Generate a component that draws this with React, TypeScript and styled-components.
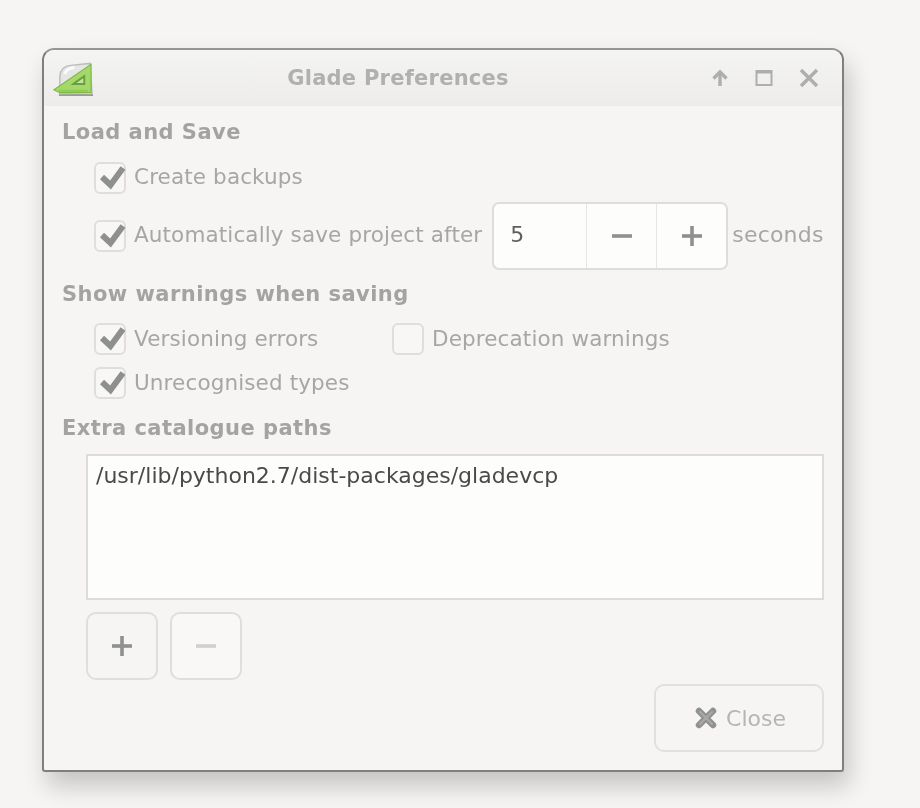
import React, { FC, ReactNode } from 'react';
import styled, { createGlobalStyle } from 'styled-components';

const GlobalStyle = createGlobalStyle`
  html, body {
    margin: 0;
    height: 100%;
    background: #f6f5f4;
  }
  body {
    font-family: "DejaVu Sans", sans-serif;
  }
`;

const Page = styled.div`
  width: 920px;
  height: 808px;
  box-sizing: border-box;
  padding: 48px 0 0 42px;
  background: #f6f5f4;
  overflow: hidden;
  filter: blur(0.7px);
`;

const Window = styled.div`
  width: 802px;
  height: 724px;
  box-sizing: border-box;
  display: flex;
  flex-direction: column;
  background: #f6f5f4;
  border: 2px solid #7f7f7d;
  border-top-color: #969694;
  border-radius: 12px 12px 3px 3px;
  box-shadow: 5px 14px 24px rgba(0, 0, 0, 0.2);
`;

const TitleBar = styled.div`
  height: 56px;
  flex: none;
  box-sizing: border-box;
  display: grid;
  grid-template-columns: 42px 1fr 132px;
  align-items: center;
  padding: 0 8px;
  border-radius: 10px 10px 0 0;
  background: linear-gradient(#f4f4f3, #edecea);
`;

const Title = styled.div`
  text-align: center;
  font-size: 21px;
  font-weight: 700;
  color: #b0b0ae;
  letter-spacing: 0.25px;
`;

const TitleButtons = styled.div`
  display: flex;
  justify-content: flex-end;
  align-items: center;
  gap: 26px;
  padding-right: 15px;
  color: #aeaeac;
`;

const Body = styled.div`
  flex: 1;
  padding: 13px 18px 0;
`;

const Heading = styled.div<{ $top?: number }>`
  height: 26px;
  line-height: 27px;
  margin-top: ${p => p.$top ?? 0}px;
  font-size: 21px;
  font-weight: 700;
  color: #a3a3a1;
  letter-spacing: 0.45px;
`;

const Row = styled.div<{ $top: number }>`
  display: flex;
  align-items: center;
  margin-top: ${p => p.$top}px;
  padding-left: 32px;
`;

const CheckLabel = styled.label<{ $width?: number }>`
  display: flex;
  align-items: center;
  gap: 8px;
  width: ${p => (p.$width ? `${p.$width}px` : 'auto')};
  font-size: 21.5px;
  color: #a6a6a4;
  letter-spacing: 0.12px;
  white-space: nowrap;
`;

const CheckText = styled.span<{ $drop?: number }>`
  padding-bottom: ${p => 4 - (p.$drop ?? 0)}px;
`;

const CheckBox = styled.span`
  width: 32px;
  height: 32px;
  flex: none;
  box-sizing: border-box;
  display: flex;
  align-items: center;
  justify-content: center;
  border: 2px solid #e0dedc;
  border-radius: 6px;
  background: #f8f7f6;
`;

const SpinBox = styled.div`
  display: flex;
  width: 236px;
  height: 68px;
  flex: none;
  box-sizing: border-box;
  margin-left: 10px;
  border: 2px solid #dfdddb;
  border-radius: 7px;
  background: #fdfdfc;
`;

const SpinValue = styled.div`
  width: 93px;
  box-sizing: border-box;
  padding-left: 16px;
  line-height: 62px;
  font-size: 22px;
  color: #5f5f5d;
`;

const SpinButton = styled.div`
  width: 70px;
  display: flex;
  align-items: center;
  justify-content: center;
  border-left: 1px solid #e8e6e4;
  color: #8f9090;
`;

const Unit = styled.span`
  margin-left: 4px;
  padding-bottom: 4px;
  font-size: 22px;
  color: #a6a6a4;
  letter-spacing: 0.2px;
`;

const PathList = styled.div`
  height: 146px;
  box-sizing: border-box;
  margin: 13px 0 0 24px;
  padding: 6px 8px;
  border: 2px solid #dedcda;
  background: #fdfdfc;
  font-size: 22px;
  line-height: 28px;
  color: #4a4a4a;
`;

const ListButtons = styled.div`
  display: flex;
  gap: 12px;
  margin: 12px 0 0 24px;
`;

const SquareButton = styled.div<{ $disabled?: boolean }>`
  width: 72px;
  height: 68px;
  box-sizing: border-box;
  display: flex;
  align-items: center;
  justify-content: center;
  border: 2px solid #e0dedc;
  border-radius: 10px;
  background: ${p => (p.$disabled ? '#f9f8f7' : '#f6f5f4')};
  color: ${p => (p.$disabled ? '#d2cfcc' : '#8f9090')};
`;

const DialogActions = styled.div`
  display: flex;
  justify-content: flex-end;
  margin-top: 4px;
`;

const CloseButton = styled.div`
  width: 170px;
  height: 68px;
  box-sizing: border-box;
  display: flex;
  align-items: center;
  justify-content: center;
  gap: 9px;
  padding-left: 3px;
  border: 2px solid #e2e0de;
  border-radius: 10px;
  font-size: 22px;
  color: #b5b5b3;
`;

const LogoSlot = styled.div`
  display: flex;
  padding: 3px 0 0 1px;
`;

const PlusIcon: FC = () => (
  <svg width="22" height="22" viewBox="0 0 22 22" fill="currentColor">
    <rect x="9.2" y="1" width="3.6" height="20" />
    <rect x="1" y="9.2" width="20" height="3.6" />
  </svg>
);

const MinusIcon: FC = () => (
  <svg width="22" height="22" viewBox="0 0 22 22" fill="currentColor">
    <rect x="1" y="9.2" width="20" height="3.6" />
  </svg>
);

const CheckMark: FC = () => (
  <svg width="28" height="26" viewBox="0 0 28 26" style={{ overflow: 'visible' }}>
    <path d="M6 12 L14.5 20 L27 3" fill="none" stroke="#8e908f" strokeWidth="6" />
  </svg>
);

const Check: FC<{ label: string; checked?: boolean; width?: number; drop?: number }> = ({ label, checked, width, drop }) => (
  <CheckLabel $width={width}>
    <CheckBox>{checked ? <CheckMark /> : null}</CheckBox>
    <CheckText $drop={drop}>{label}</CheckText>
  </CheckLabel>
);

const GladeLogo: FC = () => (
  <svg width="42" height="36" viewBox="0 0 42 36">
    <path d="M7 32 L7 14 Q8 4 18 3 L38 1 L40 33 Z" fill="#e6e6e4" stroke="#bdbdbb" strokeWidth="1.5" />
    <path d="M12 12 Q14 6 22 5" fill="none" stroke="#fafafa" strokeWidth="3" />
    <path d="M1 28 L39 2 L39 31 L7 31 Z" fill="#a5d86c" stroke="#7cbc41" strokeWidth="1.2" />
    <path d="M6 29 L36 29" stroke="#8ecb4e" strokeWidth="2" />
    <path d="M21 22 L32 14 L32 22 Z" fill="#c3e69a" stroke="#6a9f3f" strokeWidth="2" />
    <path d="M6 33.5 L41 33.5" stroke="#9a9a98" strokeWidth="2" />
  </svg>
);

const KeepAboveIcon: FC = () => (
  <svg width="18" height="18" viewBox="0 0 18 18" fill="none" stroke="currentColor" strokeWidth="3.4">
    <path d="M9 17 L9 3" />
    <path d="M2.5 9.5 L9 3 L15.5 9.5" />
  </svg>
);

const MaximizeIcon: FC = () => (
  <svg width="18" height="18" viewBox="0 0 18 18" fill="none" stroke="currentColor">
    <rect x="1.5" y="2" width="15" height="14" strokeWidth="2" />
    <path d="M1 3 H17" strokeWidth="3" />
  </svg>
);

const CloseIcon: FC = () => (
  <svg width="20" height="20" viewBox="0 0 20 20" fill="none" stroke="currentColor" strokeWidth="3.4">
    <path d="M2 2 L18 18 M18 2 L2 18" />
  </svg>
);

const StockCloseIcon: FC = () => (
  <svg width="22" height="22" viewBox="0 0 22 22" fill="none" strokeLinecap="round">
    <path d="M4 4 L18 18 M18 4 L4 18" stroke="#8f9291" strokeWidth="6.5" />
    <path d="M5 5 L17 17 M17 5 L5 17" stroke="#a9abaa" strokeWidth="2" />
  </svg>
);

const DialogWindow: FC<{ children: ReactNode }> = ({ children }) => (
  <Window>
    <TitleBar>
      <LogoSlot><GladeLogo /></LogoSlot>
      <Title>Glade Preferences</Title>
      <TitleButtons>
        <KeepAboveIcon />
        <MaximizeIcon />
        <CloseIcon />
      </TitleButtons>
    </TitleBar>
    <Body>{children}</Body>
  </Window>
);

const App: FC = () => (
  <Page>
    <GlobalStyle />
    <DialogWindow>
      <Heading>Load and Save</Heading>
      <Row $top={17}>
        <Check label="Create backups" checked />
      </Row>
      <Row $top={8}>
        <Check label="Automatically save project after" checked />
        <SpinBox>
          <SpinValue>5</SpinValue>
          <SpinButton><MinusIcon /></SpinButton>
          <SpinButton><PlusIcon /></SpinButton>
        </SpinBox>
        <Unit>seconds</Unit>
      </Row>
      <Heading $top={11}>Show warnings when saving</Heading>
      <Row $top={16}>
        <Check label="Versioning errors" checked width={298} drop={2} />
        <Check label="Deprecation warnings" drop={2} />
      </Row>
      <Row $top={12}>
        <Check label="Unrecognised types" checked drop={2} />
      </Row>
      <Heading $top={16}>Extra catalogue paths</Heading>
      <PathList>/usr/lib/python2.7/dist-packages/gladevcp</PathList>
      <ListButtons>
        <SquareButton><PlusIcon /></SquareButton>
        <SquareButton $disabled><MinusIcon /></SquareButton>
      </ListButtons>
      <DialogActions>
        <CloseButton>
          <StockCloseIcon />
          Close
        </CloseButton>
      </DialogActions>
    </DialogWindow>
  </Page>
);

export default App;
